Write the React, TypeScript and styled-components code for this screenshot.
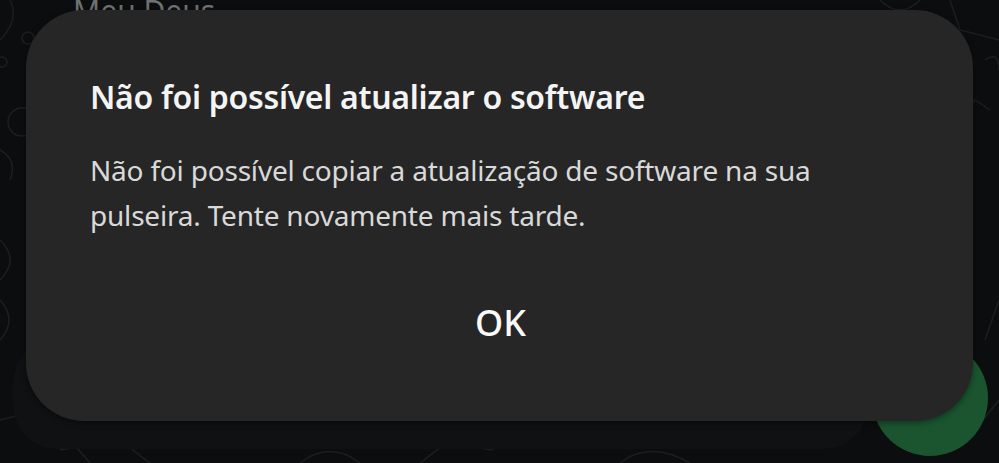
import React from "react";
import styled, { createGlobalStyle } from "styled-components";

const Global = createGlobalStyle`
  html, body { margin: 0; padding: 0; background: #0b0d0e; }
  body { width: 999px; height: 463px; overflow: hidden; }
`;

const Screen = styled.div`
  position: relative;
  width: 999px;
  height: 463px;
  overflow: hidden;
  background: #0b0d0e;
  font-family: "Noto Sans", "Open Sans", sans-serif;
`;

const Chat = styled.div`
  position: absolute;
  inset: 0;
  display: flex;
  flex-direction: column;
  justify-content: space-between;
  padding: 0 11px 14px 13px;
`;

const Pattern = styled.svg`
  position: absolute;
  inset: 0;
  pointer-events: none;
`;

const ChatTitle = styled.div`
  margin: -4px 0 0 60px;
  color: #6f7172;
  font-size: 30px;
  line-height: 30px;
`;

const Composer = styled.div`
  display: flex;
  align-items: center;
  gap: 4px;
`;

const InputBar = styled.div`
  flex: 1;
  height: 110px;
  border-radius: 44px;
  background: #0f1112;
`;

const Fab = styled.div`
  width: 116px;
  height: 116px;
  border-radius: 50%;
  background: #1a5530;
  margin-bottom: -8px;
`;

const Dialog = styled.div`
  position: absolute;
  left: 26px;
  top: 10px;
  width: 947px;
  height: 411px;
  box-sizing: border-box;
  border-radius: 58px;
  background: #262626;
  box-shadow: 0 2px 6px rgba(0, 0, 0, 0.4);
  padding: 67px 64px 0 64px;
  display: flex;
  flex-direction: column;
`;

const Title = styled.h2`
  margin: 0;
  color: #f4f4f4;
  font-size: 32px;
  line-height: 40px;
  font-weight: 600;
  letter-spacing: -0.3px;
`;

const Body = styled.p`
  margin: 31px 0 0 0;
  color: #d9d9d9;
  font-size: 28px;
  line-height: 45px;
  font-weight: 400;
  letter-spacing: -0.2px;
`;

const Actions = styled.div`
  display: flex;
  justify-content: center;
  margin-top: 63px;
`;

const OkButton = styled.button`
  background: none;
  border: none;
  color: #fafafa;
  font-family: "Noto Sans", sans-serif;
  font-size: 36px;
  font-weight: 500;
  line-height: 44px;
  padding: 0 20px;
  margin-left: 2px;
`;

export default function App() {
  return (
    <Screen>
      <Global />
      <Pattern width="999" height="463" viewBox="0 0 999 463" fill="none" stroke="#1c1f20" strokeWidth="1.5">
        <path d="M0 40 Q20 20 10 0" />
        <circle cx="28" cy="38" r="6" />
        <circle cx="2" cy="62" r="5" />
        <circle cx="22" cy="122" r="14" />
        <path d="M0 150 Q18 160 10 180" />
        <path d="M0 240 Q20 260 0 280 M0 300 Q18 320 0 340" />
        <path d="M0 420 L40 410 L70 440 L90 463" />
        <path d="M60 450 L120 440 L150 463" />
        <path d="M300 463 Q330 440 360 463 M420 463 L450 440 L490 450 L520 440" />
        <path d="M620 463 Q650 440 690 463" />
        <path d="M950 0 L960 30 L999 40" />
        <path d="M930 80 L950 90 L960 120 L975 100 L990 110" />
        <path d="M985 60 Q999 50 999 70" />
        <path d="M985 340 L999 300 M975 430 L999 400" />
        <path d="M880 0 Q900 20 920 0" />
      </Pattern>
      <Chat>
        <ChatTitle>Meu Deus</ChatTitle>
        <Composer>
          <InputBar />
          <Fab />
        </Composer>
      </Chat>
      <Dialog role="dialog">
        <Title>Não foi possível atualizar o software</Title>
        <Body>
          Não foi possível copiar a atualização de software na sua
          <br />
          pulseira. Tente novamente mais tarde.
        </Body>
        <Actions>
          <OkButton>OK</OkButton>
        </Actions>
      </Dialog>
    </Screen>
  );
}
